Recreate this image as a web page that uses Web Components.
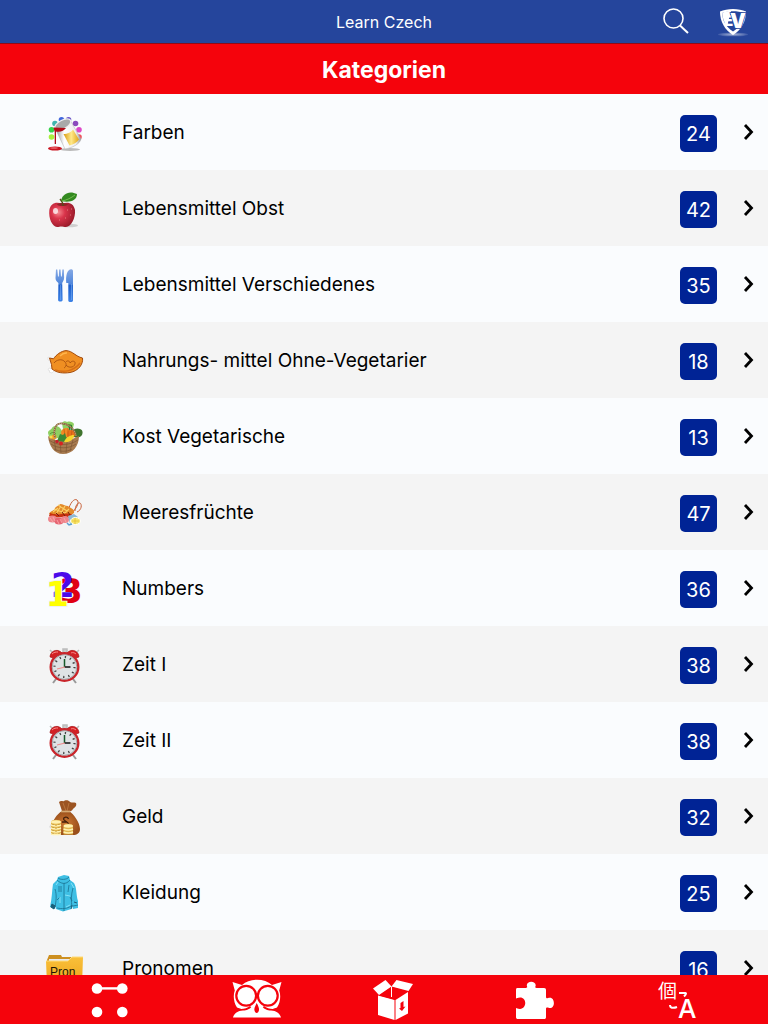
<!DOCTYPE html>
<html lang="de">
<head>
<meta charset="utf-8">
<meta name="viewport" content="width=device-width, initial-scale=1">
<title>Learn Czech – Kategorien</title>
<style>
  body { margin: 0; background: #f4f4f4; font-family: Inter, "Noto Sans", sans-serif; color: #000; }
</style>
</head>
<body>
<learn-app></learn-app>

<script>
const CLOCK = `
  <path d="M11 34l-3 4M28 34l3 4" stroke="#999" stroke-width="2"/>
  <path d="M5 5l3 3M34 5l-3 3M18 4h4v4h-4z" stroke="#bbb" stroke-width="1.500" fill="#ccc"/>
  <path d="M5 12c0-5 6-9 11-5l1 1-9 5zM34 12c0-5-6-9-11-5l-1 1 9 5z" fill="#d51f22" stroke="#9c1014" stroke-width=".6"/>
  <path d="M7 9c2-2 4-2 6-2M26 8c2-1 4 0 5 1" stroke="#f68a8a" fill="none"/>
  <circle cx="19.500" cy="22" r="13.800" fill="#dfe3e5" stroke="#c9252b" stroke-width="2.400"/>
  <circle cx="19.500" cy="22" r="12.300" fill="none" stroke="#8d9497" stroke-width=".7"/>
  <circle cx="19.500" cy="22" r="10" fill="none" stroke="#444" stroke-width="2.200" stroke-dasharray="1.300 3.936"/>
  <path d="M19.500 22V14" stroke="#155a2a" stroke-width="1.500"/>
  <path d="M19.500 22h6" stroke="#111" stroke-width="1.500"/>
  <path d="M20 22l-8 2" stroke="#e88" stroke-width="1"/>`;

const PICTURES = {
  paint: `
  <defs><linearGradient id="m"><stop stop-color="#888"/><stop offset=".35" stop-color="#fff"/><stop offset=".8" stop-color="#eee"/><stop offset="1" stop-color="#999"/></linearGradient>
  <linearGradient id="y"><stop stop-color="#d89a10"/><stop offset=".5" stop-color="#ffe98a"/><stop offset="1" stop-color="#e0a418"/></linearGradient></defs>
  <circle cx="6.500" cy="24" r="2.800" fill="#a8f03c"/><circle cx="6.500" cy="16.800" r="2.800" fill="#35d24a"/>
  <circle cx="10" cy="10.500" r="2.800" fill="#3fb5ae"/><circle cx="16.500" cy="6.800" r="2.800" fill="#4167dd"/>
  <circle cx="23.500" cy="6.800" r="2.800" fill="#6b55c8"/><circle cx="30.500" cy="10.500" r="2.800" fill="#8c4bbd"/>
  <circle cx="34" cy="16.800" r="2.800" fill="#dd49c8"/><circle cx="34" cy="24" r="2.800" fill="#f0525c"/>
  <ellipse cx="25" cy="36.500" rx="10" ry="1.500" fill="#bbb"/>
  <path d="M10 15L25 7l11 19c-1 5-9 9-16 10z" fill="url(#m)" stroke="#aaa" stroke-width=".5"/>
  <ellipse cx="17.800" cy="11.500" rx="8.800" ry="4.300" transform="rotate(-28 17.800 11.500)" fill="#a9a9a9" stroke="#eee" stroke-width="1.300"/>
  <path d="M8.500 14.500l12.500 .500c-2 3-6 4.500-10 3.500v12.500h-1.300v-12z" fill="#b30b17"/>
  <path d="M18.500 21c4 0 8-2 9.500-4.500l6 10c-2 3-5.500 5-9.500 6z" fill="url(#y)"/>
  <ellipse cx="10" cy="35.500" rx="7" ry="2" fill="#c91521"/><ellipse cx="9" cy="35" rx="4" ry=".7" fill="#ee6a70"/>`,
  apple: `
  <defs><radialGradient id="r" cx=".35" cy=".4" r=".75"><stop stop-color="#f58a90"/><stop offset=".35" stop-color="#d9344a"/><stop offset="1" stop-color="#8c1523"/></radialGradient></defs>
  <ellipse cx="24" cy="36.500" rx="9" ry="1.700" fill="#cfcfcf"/>
  <path d="M17 15c5-3 12-1 13 6 .7 8-4 17-9 17-2 0-3-.6-4.500-.6S14 38 12 38C7 37.500 3.500 29 4.300 21.500 5 14 12 12 17 15z" fill="url(#r)"/>
  <path d="M12 15.500c2-2 8-2 11 0-2 2-9 2-11 0z" fill="#8d2528"/>
  <path d="M18 17c0-3-1-5-3-7" stroke="#5c4a1c" stroke-width="1.500" fill="none"/>
  <path d="M16 12C17 5 24 1 32 5c0 7-8 9-16 7z" fill="#338a20"/><path d="M17 12c5-1 9-3 13-6" stroke="#84c65a" stroke-width=".8" fill="none"/>
  <ellipse cx="10.500" cy="22" rx="2.500" ry="3" fill="#fff" opacity=".75"/>
  <path d="M22 21h.8M25 26h.8M20 29h.8M26 20h.8M14 31h.8" stroke="#f5b0a0" stroke-width=".8"/>`,
  cutlery: `
  <defs><linearGradient id="b" x2="0" y2="1"><stop stop-color="#85a9e4"/><stop offset=".45" stop-color="#4f86dc"/><stop offset=".5" stop-color="#1c5ecb"/><stop offset="1" stop-color="#3d83e6"/></linearGradient></defs>
  <path d="M11 4.500h1.300l.7 7h.8l.4-7h1.300l.5 7h.8l.6-7h1.400l.3 8c0 3-1.300 4-1.900 5.500l.4 17c0 2-4.500 2-4.500 0l.3-17C12 16.500 10.500 15.500 10.500 13z" fill="url(#b)"/>
  <path d="M28 6v29.500c0 2-4.700 2-4.700 0V18h-2C20.500 11 22 4 26.500 4.200 27.500 4.500 28 5 28 6z" fill="url(#b)"/>
  <path d="M15.700 20v15M26.700 19v16" stroke="#7db0f5" stroke-width=".7"/>`,
  chicken: `
  <path d="M7 28l-3-1-1 2 2 1-1 1 3 1 3-3M5 17l-2-1v3l2 1" fill="#fff" stroke="#ddd" stroke-width=".7"/>
  <path d="M4.500 17l4 .8C11 14 16 10 21 9.600c7 .4 9.500 6 16.500 7.400 1 6-4 13-12.500 14.500-7 1-13 .5-18-3.500l-.5-4.500z" fill="#f08f22" stroke="#a24a0c" stroke-width="1"/>
  <path d="M9 22c2-3 8-5 11-1 2 2 1 5-1 6M21 21c1-2 4-1 4 1 2-3 6-2 5 1-1 4-7 4-9 1" fill="none" stroke="#a24a0c" stroke-width=".8"/>
  <path d="M15 15c2-2 4-3.500 7-3" fill="none" stroke="#ffb54c" stroke-width="1.500"/>
  <path d="M10 29c9 3 19 1 25-7" fill="none" stroke="#d66e17" stroke-width="1.500"/>`,
  basket: `
  <path d="M3 16c0-3 3-3 4-5s5-3 8 0 3 7 2 9l-12 3zM17 6c1-2 4-2 5-1 3-1 6 0 7 2l-1 4-10 1z" fill="#8fcf62"/>
  <path d="M28 14c1-3 5-3 7-2 3 1 3 4 2 6-2 3-6 3-8 2z" fill="#3f742e"/>
  <path d="M5 17c2-2 4-2 6 0M18 7c2 1 5 0 8 1" stroke="#4f9b36" fill="none"/>
  <path d="M3 19c9 7 20 6 31 0 0 10-6 18-16 18C9 37 4 29 3 19z" fill="#a77a4f"/>
  <path d="M4 23c8 6 20 6 29 0M6 27c7 5 18 5 25 0M9 32c6 3 13 3 18 0M9 22l2 12M15 25l1 11M22 25l-1 11M28 23l-3 11" stroke="#7d5634" stroke-width=".7" fill="none"/>
  <circle cx="21" cy="16" r="5" fill="#f08b24"/><circle cx="26" cy="17" r="4" fill="#e8711c"/>
  <path d="M19 12l1 8M23 11v9M27 13l-1 8" stroke="#c95b13" stroke-width=".8"/>
  <path d="M12 24l3-7 3 1 2-2 1 4 2 1-2 4z" fill="#3c8a35"/><path d="M19 25c2-5 6-7 10-7 0 4-4 8-10 7z" fill="#f6d62c"/>
  <circle cx="9" cy="20" r="2.500" fill="#f39d26"/><circle cx="16" cy="26.500" r="2" fill="#d92320"/><circle cx="12" cy="24.500" r="1.700" fill="#c71e2c"/><circle cx="6" cy="20" r="1.600" fill="#f7dc4d"/>
  <path d="M24 8l1 5M26 8l1 5" stroke="#247b2b" stroke-width="1.500"/>
  <path d="M10 21c-2-7 0-14 5-14.500C22 6 30 11 31 19" stroke="#8a6540" stroke-width="1.700" fill="none"/>
  <path d="M10 21c-2-7 0-14 5-14.500C22 6 30 11 31 19" stroke="#e4caa0" stroke-width=".7" stroke-dasharray="1 1" fill="none"/>`,
  seafood: `
  <path d="M23 18c2-8 6-13 9-11s-1 10-6 13M30 18c0-5 3-9 5-8s2 7-3 9" fill="none" stroke="#c8613a" stroke-width="1"/>
  <path d="M4 21c1-3 4-3 6-5 0-3 4-3 5-5 3 0 5 2 8 2 2 2 5 2 6 5 1 3-3 4-6 4z" fill="#e38a2b"/>
  <path d="M8 19l5-4M11 21l5-8M16 20l4-7M19 21l5-5M13 12l9 6M9 16l11 4" stroke="#fbd067" stroke-width="1.100"/>
  <path d="M5 20c7 3 15-1 22 1l-2 4c-8-2-14 1-21-2z" fill="#c9310e"/>
  <path d="M11 20l3 3M17 19l3 4M23 19l2 3" stroke="#741e0b"/>
  <ellipse cx="7.500" cy="26" rx="4.500" ry="3.500" fill="#ee858c"/><ellipse cx="14" cy="28" rx="4.500" ry="3.500" fill="#e66572"/><ellipse cx="20" cy="26.500" rx="4" ry="3.500" fill="#ee858c"/>
  <path d="M5 25l3 4M8 24l2 4M12 27l2 4M15 26l2 4M19 25l2 4" stroke="#ffb5b5" stroke-width=".7"/>
  <path d="M23 23l6-2 4 3-3 5-5 2z" fill="#8fb9d4"/>
  <ellipse cx="30.500" cy="28" rx="5" ry="3.500" fill="#f8e66d" stroke="#fff"/><path d="M27 28h7M30 25v6" stroke="#e2b728" stroke-width=".7"/>
  <path d="M22 30l2 2 3-1" stroke="#5c9fd0" stroke-width="1.500" fill="none"/>`,
  numbers: `
  <g font-family="DejaVu Sans, sans-serif" font-weight="bold">
  <text x="14" y="34" font-size="34" fill="#e00012">3</text>
  <text x="6" y="28" font-size="34" fill="#4a0bea">2</text>
  <text x="1" y="37" font-size="33" fill="#ffff00" stroke="#eee" stroke-width="1.500" paint-order="stroke">1</text></g>`,
  clock: CLOCK,
  money: `
  <defs><radialGradient id="g"><stop stop-color="#cf7a34"/><stop offset="1" stop-color="#9a4f1a"/></radialGradient></defs>
  <path d="M4 30l3-5 2 9z" fill="#ddd"/>
  <path d="M17 14L14 5c2-2 4 0 5-1s5-1 6 1c2 1 4 0 6 1 1 3-1 4-3 6-1 2-3 2-4 3z" fill="#9c5422"/><path d="M18 6l3 8M24 6l-2 8" stroke="#b9743d"/>
  <path d="M17 14h7c5 3 11 12 11 18 0 4-3 6-7 6H11c-4 0-5-3-4.500-7C7 24 12 17 17 14z" fill="url(#g)"/>
  <path d="M16 14.500h9" stroke="#d5aa72" stroke-width="1.700"/>
  <path d="M23.500 22c-1-3-5-2-5 0s5 2.500 5 5M17 25h5" stroke="#44200b" stroke-width="1.300" fill="none"/>
  <path d="M6 25c0-3 10-3 10 0v12.500H6z" fill="#e2b64c"/><ellipse cx="11" cy="25" rx="5" ry="1.700" fill="#fff1b0"/>
  <path d="M6 28q5 2 10 0M6 31q5 2 10 0M6 34q5 2 10 0M6 37q5 1 10 0" stroke="#fff2b5" stroke-width="1.400" fill="none"/>
  <path d="M8 27v10M11 28v9M14 27v10" stroke="#a47724" stroke-width=".7" stroke-dasharray="1 2"/>
  <path d="M18.500 29c0-3 9.500-3 9.500 0v8.500h-9.500z" fill="#e2b64c"/><ellipse cx="23.300" cy="29" rx="4.700" ry="1.700" fill="#fff1b0"/>
  <path d="M18.500 32q5 2 9.500 0M18.500 35q5 2 9.500 0" stroke="#fff2b5" stroke-width="1.400" fill="none"/>`,
  jacket: `
  <path d="M13 4l6-2 5 1 1 4 4 3c3 5 2 12 4 18v7l-5 1-1-3-.5 3-8.500 2.500-7-2.500-1-3-1 3-4-2C7 25 7 17 8 11l4-4z" fill="#3ebfe4"/>
  <path d="M13 5c2 2 9 2 11-1M12 7c4 4 9 5 13 0M19 10v28M10 16c2 6 1 13 0 18M28 15c-2 7-2 13-1 19M14 13v6M16 13v6M24 12l-1 7M12 27l3-3M25 24l2 4M7 32l4 1M28 33l5-1M12 35c5 1 10 1 14-2" stroke="#1b7191" stroke-width=".8" fill="none"/>
  <path d="M11 12l2-3M26 10l3 5M20 22l5 1M15 24v6M21 34l4-2" stroke="#84e1f6" fill="none"/>
  <path d="M7 31l3 2-1 3-3-2zM29 29l3 1M27 32l-1 4" fill="#1b5f79" stroke="#1b5f79"/>`,
  folder: `
  <defs><linearGradient id="f" x2="0" y2="1"><stop stop-color="#f9c03a"/><stop offset="1" stop-color="#eea51c"/></linearGradient></defs>
  <path d="M2 11l2-5h12l1 2h20v12H2z" fill="#cd8f20"/><path d="M4 10h21v4H4z" fill="#e9e9ee"/>
  <path d="M1 12h22l4-4h11l-1 28H2z" fill="url(#f)"/><path d="M1 12h22l4-4h11" stroke="#ffdc7d" fill="none"/>
  <text x="5" y="27" font-family="Liberation Sans, sans-serif" font-size="12" fill="#1b1403">Pron</text>`
};

const TAB_ICONS = {
  match: `<g fill="#fff"><circle cx="17" cy="13.500" r="5.300"/><circle cx="42.300" cy="13.500" r="5.300"/><circle cx="17" cy="37" r="5.300"/><circle cx="42.300" cy="37" r="5.300"/><path d="M17 12.200h25v2.400H17z"/></g>`,
  owl: `<path fill="#fff" d="M10.500 7l9.500 3c4-3.500 9-5.300 15-5.300S46 6.500 50 10l9.500-3-2.300 8.500c1.800 4.500 1.300 12-2.200 17L48 35H22l-7-2.500c-3.500-5-4-12.500-2.200-17z"/>
    <path fill="#f5030c" d="M14 33c5 2 10 1 14-2l4 4-8 4H11zM56 33c-5 2-10 1-14-2l-4 4 8 4h13z"/>
    <path fill="#fff" d="M11 42.500c1-4 5-7 10-7 4-.2 6-.8 9-4l5-3.500 5 3.500c3 3.200 5 3.800 9 4 5 0 9 3 10 7z"/>
    <circle cx="24.200" cy="20.800" r="9.900" fill="#fff" stroke="#f5030c" stroke-width="2.200"/><circle cx="45.800" cy="20.800" r="9.900" fill="#fff" stroke="#f5030c" stroke-width="2.200"/>
    <path fill="#f5030c" d="M34.700 28c1.500 3 2.600 5 2.300 7s-1.300 3-2.300 3-2-1-2.300-3 1-4 2.300-7z"/>`,
  box: `<g fill="#fff"><path d="M9 13.500L21.500 5l6 6.500L15 20z"/><path d="M27.500 11.500L32.500 5 49 9l-4.500 7z"/><path d="M14 20.500L30.500 25v20L14 40z"/><path d="M31.500 25L44 17v21.500L31.500 45z"/></g>
    <path d="M15.500 20.500L27.500 12 43 16.500 30.500 24.500z" fill="#f5030c"/><path d="M27.500 11.500V22" stroke="#fff"/>
    <path d="M36.500 28l3-2v6l2-.5-3.500 4.500-3-2.500 1.500-.5z" fill="#f5030c"/>`,
  puzzle: `<path fill="#fff" d="M11.500 13H20c1.500 0 1.300-1 .8-2.500C20.500 5.500 30 5.500 29.700 10.500c-.5 1.500-.7 2.500.8 2.500H38c1.500 0 2 .7 2 2v7c0 1.500 1.500 1.500 3 .8 6.500-1.300 6.500 11.500 0 10.200-1.500-.7-3-.7-3 .8V42c0 1.500-.5 2-2 2H12c-1.300 0-2-.5-2-2v-9c1 0 1.500 1 4 1 7-.5 7-11.500 0-11.500-2.500 0-3 1-4 1V15c0-1.500.5-2 1.500-2z"/>`,
  translate: `<text x="10" y="23" font-family="Noto Sans CJK JP, sans-serif" font-size="19" fill="#fff">個</text>
    <text x="30" y="43" font-family="Inter, sans-serif" font-weight="500" font-size="26" fill="#fff">A</text>
    <path d="M31 18h6.500c.7 0 1 1-1.500 3.500M22 30c0 3 3 3.500 7 2" fill="none" stroke="#fff" stroke-width="2"/>`
};

function define(name, html, fill) {
  customElements.define(name, class extends HTMLElement {
    constructor() {
      super();
      const t = document.createElement('template');
      t.innerHTML = html;
      this.attachShadow({ mode: 'open' }).append(t.content.cloneNode(true));
    }
    connectedCallback() { if (fill) fill(this, this.shadowRoot); }
  });
}

define('category-picture', `
  <style>:host { display: block; flex: none; width: 41px; height: 41px; } svg { display: block; }</style>
  <svg width="41" height="41" viewBox="0 0 41 41" fill="none" aria-hidden="true"></svg>`,
  (el, root) => { root.querySelector('svg').innerHTML = PICTURES[el.getAttribute('name')]; });

define('count-badge', `
  <style>:host { display: flex; flex: none; align-items: center; justify-content: center; width: 37px; height: 37px;
    border-radius: 5px; background: #002395; color: #fff; font-size: 20px; line-height: 24px; }</style>
  <slot></slot>`);

define('category-row', `
  <style>
    :host { display: block; background: #fafcfe; }
    :host(:nth-of-type(even)) { background: #f4f4f4; }
    a { display: flex; align-items: center; box-sizing: border-box; height: 76px; padding: 3px 14px 0 45px; color: inherit; text-decoration: none; }
    .name { flex: 1; padding: 0 15px 1px 36px; font-size: 19px; line-height: 24px; }
    .chevron { flex: none; margin-left: 25px; padding-bottom: 3px; }
  </style>
  <a href="#"><slot name="picture"></slot><span class="name"><slot></slot></span><slot name="count"></slot>
  <svg class="chevron" width="12" height="18" viewBox="0 0 12 18" fill="none" stroke="#000" stroke-width="2.800" aria-hidden="true"><path d="M3 2l6.500 7L3 16"/></svg></a>`);

define('top-bar', `
  <style>
    :host { display: grid; grid-template-columns: 1fr auto 1fr; align-items: center; flex: none; box-sizing: border-box;
      height: 44px; padding: 0 20px; background: #25459c; border-bottom: 1px solid #8d0b18; color: #fff; }
    .title { grid-column: 2; font-size: 16px; line-height: 20px; }
    .actions { display: flex; justify-content: flex-end; align-items: center; gap: 28px; }
    button { display: block; padding: 0; border: 0; background: none; }
    svg { display: block; }
  </style>
  <span class="title"><slot></slot></span>
  <div class="actions">
    <button aria-label="Suchen"><svg width="28" height="30" viewBox="0 0 28 30" fill="none" stroke="#fff" stroke-width="1.600"><circle cx="11.500" cy="11.500" r="9.500"/><path d="M18 18.500l8 7.500" stroke-width="2"/></svg></button>
    <button aria-label="EV"><svg width="30" height="30" viewBox="0 0 30 30">
      <defs><radialGradient id="h"><stop stop-color="#fff" stop-opacity=".6"/><stop offset="1" stop-color="#fff" stop-opacity=".1"/></radialGradient></defs>
      <ellipse cx="15" cy="27.500" rx="15" ry="2" fill="url(#h)"/>
      <path d="M2 4.500C9 1 21 1 28 4.500 28 15 23 23 15 28 7 23 2 15 2 4.500z" fill="#fff"/>
      <path d="M4.200 6C10 3.500 20 3.500 25.800 6 25.500 14 22 20 15 24.500 8 20 4.500 14 4.200 6z" fill="#25459c"/>
      <path d="M4.200 6C7 4.500 10 4 13 4L9 19C6 15 4.300 11 4.200 6z" fill="#fff"/>
      <g font-family="Inter, sans-serif" font-weight="900" fill="#fff"><text x="6" y="19" font-size="15">E</text><text x="12" y="21" font-size="20" stroke="#25459c" stroke-width="1.500" paint-order="stroke">V</text></g></svg></button>
  </div>`);

define('section-heading', `
  <style>:host { display: block; flex: none; background: #f5030c; color: #fff; text-align: center; }
    h1 { margin: 0; padding: 12px 0 10px; font-size: 23px; line-height: 28px; font-weight: 700; }</style>
  <h1><slot></slot></h1>`);

define('tab-button', `
  <style>:host { display: flex; justify-content: center; } button { padding: 0; border: 0; background: none; } svg { display: block; }</style>
  <button><svg width="60" height="49" viewBox="0 0 60 49"></svg></button>`,
  (el, root) => {
    root.querySelector('svg').innerHTML = TAB_ICONS[el.getAttribute('icon')];
    root.querySelector('button').setAttribute('aria-label', el.getAttribute('label'));
  });

define('tab-bar', `
  <style>:host { display: grid; grid-template-columns: repeat(5, 1fr); flex: none; height: 49px; padding: 0 19px 0 39px; background: #f5030c; }</style>
  <slot></slot>`);

const CATEGORIES = [
  ['paint', 'Farben', 24], ['apple', 'Lebensmittel Obst', 42], ['cutlery', 'Lebensmittel Verschiedenes', 35],
  ['chicken', 'Nahrungs- mittel Ohne-Vegetarier', 18], ['basket', 'Kost Vegetarische', 13], ['seafood', 'Meeresfrüchte', 47],
  ['numbers', 'Numbers', 36], ['clock', 'Zeit I', 38], ['clock', 'Zeit II', 38], ['money', 'Geld', 32],
  ['jacket', 'Kleidung', 25], ['folder', 'Pronomen', 16]
];

define('learn-app', `
  <style>
    :host { display: flex; flex-direction: column; height: 100vh; }
    main { flex: 1; min-height: 0; overflow-y: auto; scrollbar-width: none; }
  </style>
  <top-bar>Learn Czech</top-bar>
  <section-heading>Kategorien</section-heading>
  <main>${CATEGORIES.map(([p, n, c]) => `<category-row><category-picture slot="picture" name="${p}"></category-picture>${n}<count-badge slot="count">${c}</count-badge></category-row>`).join('')}</main>
  <tab-bar>
    <tab-button icon="match" label="Zuordnen"></tab-button>
    <tab-button icon="owl" label="Lernen"></tab-button>
    <tab-button icon="box" label="Box"></tab-button>
    <tab-button icon="puzzle" label="Puzzle"></tab-button>
    <tab-button icon="translate" label="Sprache"></tab-button>
  </tab-bar>`);
</script>
</body>
</html>
